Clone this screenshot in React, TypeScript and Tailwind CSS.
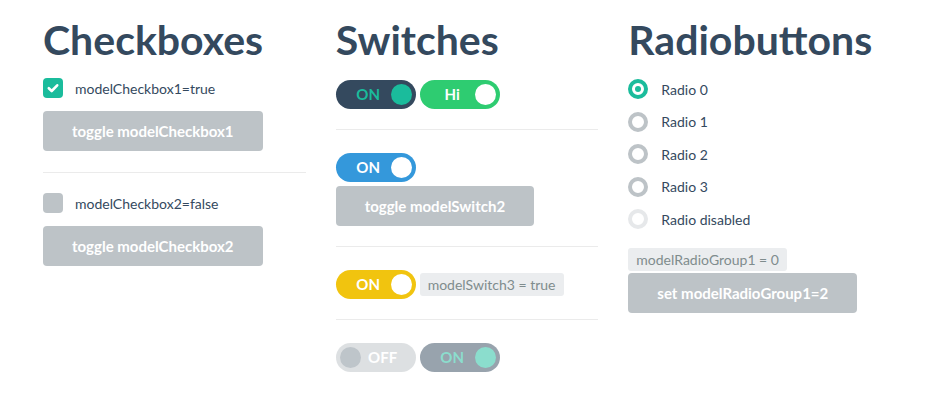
import React from 'react';

type SwitchProps = {
  label: string;
  on: boolean;
  track: string;
  knob: string;
  text: string;
  disabled?: boolean;
};

function Switch({ label, on, track, knob, text, disabled }: SwitchProps) {
  return (
    <div className={`w-[80px] h-[29px] rounded-full flex items-center shrink-0 ${track} ${disabled ? 'opacity-50' : ''}`}>
      {on ? (
        <>
          <span className={`flex-1 pl-[10px] text-center text-[15px] font-bold leading-none ${text}`}>{label}</span>
          <span className={`w-[21px] h-[21px] rounded-full mr-[4px] ${knob}`} />
        </>
      ) : (
        <>
          <span className={`w-[21px] h-[21px] rounded-full ml-[4px] ${knob}`} />
          <span className={`flex-1 pr-[11px] text-center text-[15px] font-bold leading-none ${text}`}>{label}</span>
        </>
      )}
    </div>
  );
}

function Checkbox({ checked, label }: { checked: boolean; label: string }) {
  return (
    <div className="flex items-center h-[20px] gap-[12px]">
      <span className={`w-[20px] h-[20px] rounded-[4px] flex items-center justify-center ${checked ? 'bg-[#1abc9c]' : 'bg-[#bdc3c7]'}`}>
        {checked && (
          <svg width="20" height="20" viewBox="0 0 20 20">
            <path d="M5.8 10.2 L8.7 13 L14.2 7.3" fill="none" stroke="white" strokeWidth="2.6" strokeLinecap="round" strokeLinejoin="round" />
          </svg>
        )}
      </span>
      <span className="text-[14px] text-[#34495e]">{label}</span>
    </div>
  );
}

function Radio({ checked, disabled, label }: { checked?: boolean; disabled?: boolean; label: string }) {
  let ring = 'border-[#bdc3c7]';
  if (checked) ring = 'border-[#1abc9c]';
  if (disabled) ring = 'border-[#e6e8ea]';
  return (
    <div className="flex items-center h-[20px] gap-[13px]">
      <span className={`w-[20px] h-[20px] rounded-full border-[4px] bg-white flex items-center justify-center ${ring}`}>
        {checked && <span className="w-[6px] h-[6px] rounded-full bg-[#1abc9c]" />}
      </span>
      <span className="text-[14px] text-[#34495e]">{label}</span>
    </div>
  );
}

function GrayButton({ children }: { children: React.ReactNode }) {
  return (
    <div className="inline-flex items-center justify-center h-[40px] px-[29px] rounded-[4px] bg-[#bdc3c7] text-white text-[15px] font-bold">
      {children}
    </div>
  );
}

function Tag({ children }: { children: React.ReactNode }) {
  return (
    <div className="inline-flex items-center h-[23px] px-[8px] rounded-[3px] bg-[#ebedef] text-[#7f8c8d] text-[14px]">
      {children}
    </div>
  );
}

const Rule = () => <div className="h-px bg-[#ebebeb]" />;

export default function App() {
  return (
    <div className="w-[937px] h-[419px] bg-white font-['Lato',sans-serif] overflow-hidden">
      <div className="ml-[28px] w-[878px] grid grid-cols-3 pt-[17px]">
        {/* checkboxes */}
        <div className="px-[15px]">
          <h2 className="text-[41px] leading-[45px] font-bold text-[#34495e]">Checkboxes</h2>
          <div className="mt-[16px]">
            <Checkbox checked label="modelCheckbox1=true" />
          </div>
          <div className="mt-[13px]">
            <GrayButton>toggle modelCheckbox1</GrayButton>
          </div>
          <div className="mt-[21px]">
            <Rule />
          </div>
          <div className="mt-[20px]">
            <Checkbox checked={false} label="modelCheckbox2=false" />
          </div>
          <div className="mt-[13px]">
            <GrayButton>toggle modelCheckbox2</GrayButton>
          </div>
        </div>

        {/* switches */}
        <div className="px-[15px]">
          <h2 className="text-[41px] leading-[45px] font-bold text-[#34495e]">Switches</h2>
          <div className="mt-[18px] flex gap-[4px]">
            <Switch label="ON" on track="bg-[#34495e]" knob="bg-[#1abc9c]" text="text-[#1abc9c]" />
            <Switch label="Hi" on track="bg-[#2ecc71]" knob="bg-white" text="text-white" />
          </div>
          <div className="mt-[20px]">
            <Rule />
          </div>
          <div className="mt-[23px]">
            <Switch label="ON" on track="bg-[#3498db]" knob="bg-white" text="text-white" />
          </div>
          <div className="mt-[4px]">
            <GrayButton>toggle modelSwitch2</GrayButton>
          </div>
          <div className="mt-[20px]">
            <Rule />
          </div>
          <div className="mt-[23px] flex items-center gap-[4px]">
            <Switch label="ON" on track="bg-[#f1c40f]" knob="bg-white" text="text-white" />
            <Tag>modelSwitch3 = true</Tag>
          </div>
          <div className="mt-[20px]">
            <Rule />
          </div>
          <div className="mt-[23px] flex gap-[4px]">
            <Switch label="OFF" on={false} disabled track="bg-[#bdc3c7]" knob="bg-[#7f8c97]" text="text-white" />
            <Switch label="ON" on disabled track="bg-[#34495e]" knob="bg-[#1abc9c]" text="text-[#1abc9c]" />
          </div>
        </div>

        {/* radios */}
        <div className="px-[15px]">
          <h2 className="text-[41px] leading-[45px] font-bold text-[#34495e]">Radiobuttons</h2>
          <div className="mt-[17px] flex flex-col gap-[12.5px]">
            <Radio checked label="Radio 0" />
            <Radio label="Radio 1" />
            <Radio label="Radio 2" />
            <Radio label="Radio 3" />
            <Radio disabled label="Radio disabled" />
          </div>
          <div className="mt-[18px]">
            <Tag>modelRadioGroup1 = 0</Tag>
          </div>
          <div className="mt-[2px]">
            <GrayButton>set modelRadioGroup1=2</GrayButton>
          </div>
        </div>
      </div>
    </div>
  );
}
